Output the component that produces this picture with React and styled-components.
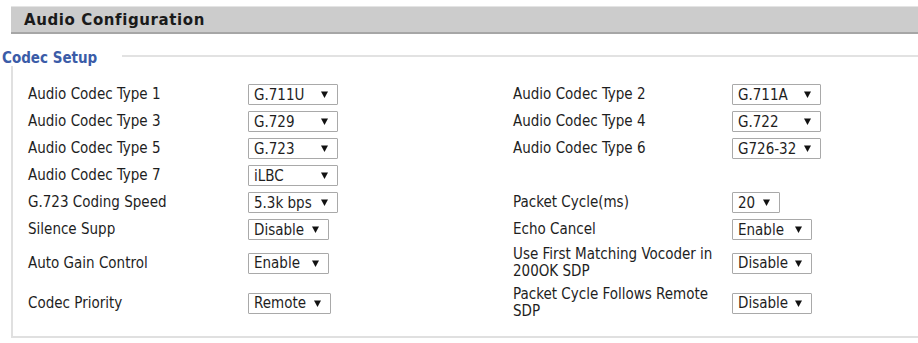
import React from 'react';
import styled, { createGlobalStyle } from 'styled-components';

const GlobalStyle = createGlobalStyle`
  body {
    margin: 0;
    background: #ffffff;
    font-family: "DejaVu Sans Condensed", "DejaVu Sans", sans-serif;
  }
`;

const Page = styled.div`
  padding-top: 6px;
  width: 918px;
`;

const HeaderBar = styled.div`
  margin-left: 11px;
  height: 25px;
  display: flex;
  align-items: center;
  padding-left: 13px;
  background-color: #cccccc;
  border-top: 1px solid #e4e4e4;
  border-bottom: 2px solid #a6a6a6;
  font-family: "DejaVu Sans", sans-serif;
  font-weight: bold;
  font-size: 15px;
  letter-spacing: 0.6px;
  color: #1a1a1a;
`;

const SectionTitle = styled.div`
  display: flex;
  align-items: center;
  margin-top: 14px;
  padding-left: 2px;
  height: 18px;
`;

const TitleText = styled.span`
  font-weight: bold;
  font-size: 15px;
  color: #3b5ca8;
  line-height: 18px;
  margin-top: 1px;
`;

const TitleLine = styled.div`
  flex: 1;
  margin-left: 25px;
  margin-top: -2px;
  border-top: 2px solid #e2e2e2;
`;

const Box = styled.div`
  margin-left: 11px;
  padding: 15px 0 13px 15px;
  border-left: 2px solid #e0e0e0;
  border-bottom: 2px solid #e0e0e0;
  display: grid;
  grid-template-columns: 220px 265px 219px 1fr;
  grid-auto-rows: minmax(27px, auto);
  align-items: center;
`;

const Label = styled.div`
  font-size: 15px;
  line-height: 17px;
  color: #1e1e1e;
  padding: 3px 0;
  max-width: ${p => (p.$wrap ? '210px' : 'none')};
`;

const Cell = styled.div`
  display: flex;
  align-items: center;
  padding: 3px 0;
`;

const SelectBox = styled.div`
  box-sizing: border-box;
  width: ${p => p.$width}px;
  height: 21px;
  display: flex;
  align-items: center;
  justify-content: space-between;
  padding: 0 9px 0 5px;
  border: 1px solid #a9a9a9;
  border-radius: 1px;
  background: #fff;
  font-size: 15px;
  color: #1e1e1e;
  white-space: nowrap;
`;

const Arrow = () => (
  <svg width="7" height="7" viewBox="0 0 7 7">
    <path d="M0 0.5 L7 0.5 L3.5 7 Z" fill="#111" />
  </svg>
);

const Select = ({ value, width }) => (
  <Cell>
    <SelectBox $width={width}>
      <span>{value}</span>
      <Arrow />
    </SelectBox>
  </Cell>
);

const rows = [
  [['Audio Codec Type 1', 'G.711U', 90], ['Audio Codec Type 2', 'G.711A', 89]],
  [['Audio Codec Type 3', 'G.729', 90], ['Audio Codec Type 4', 'G.722', 89]],
  [['Audio Codec Type 5', 'G.723', 90], ['Audio Codec Type 6', 'G726-32', 89]],
  [['Audio Codec Type 7', 'iLBC', 90], null],
  [['G.723 Coding Speed', '5.3k bps', 90], ['Packet Cycle(ms)', '20', 48]],
  [['Silence Supp', 'Disable', 81], ['Echo Cancel', 'Enable', 80]],
  [['Auto Gain Control', 'Enable', 81], ['Use First Matching Vocoder in 200OK SDP', 'Disable', 80]],
  [['Codec Priority', 'Remote', 83], ['Packet Cycle Follows Remote SDP', 'Disable', 80]],
];

export default function App() {
  return (
    <Page>
      <GlobalStyle />
      <HeaderBar>Audio Configuration</HeaderBar>
      <SectionTitle>
        <TitleText>Codec Setup</TitleText>
        <TitleLine />
      </SectionTitle>
      <Box>
        {rows.map((row, i) =>
          row.map((item, j) =>
            item ? (
              <React.Fragment key={`${i}-${j}`}>
                <Label $wrap>{item[0]}</Label>
                <Select value={item[1]} width={item[2]} />
              </React.Fragment>
            ) : (
              <React.Fragment key={`${i}-${j}`}>
                <Label />
                <Cell />
              </React.Fragment>
            )
          )
        )}
      </Box>
    </Page>
  );
}
